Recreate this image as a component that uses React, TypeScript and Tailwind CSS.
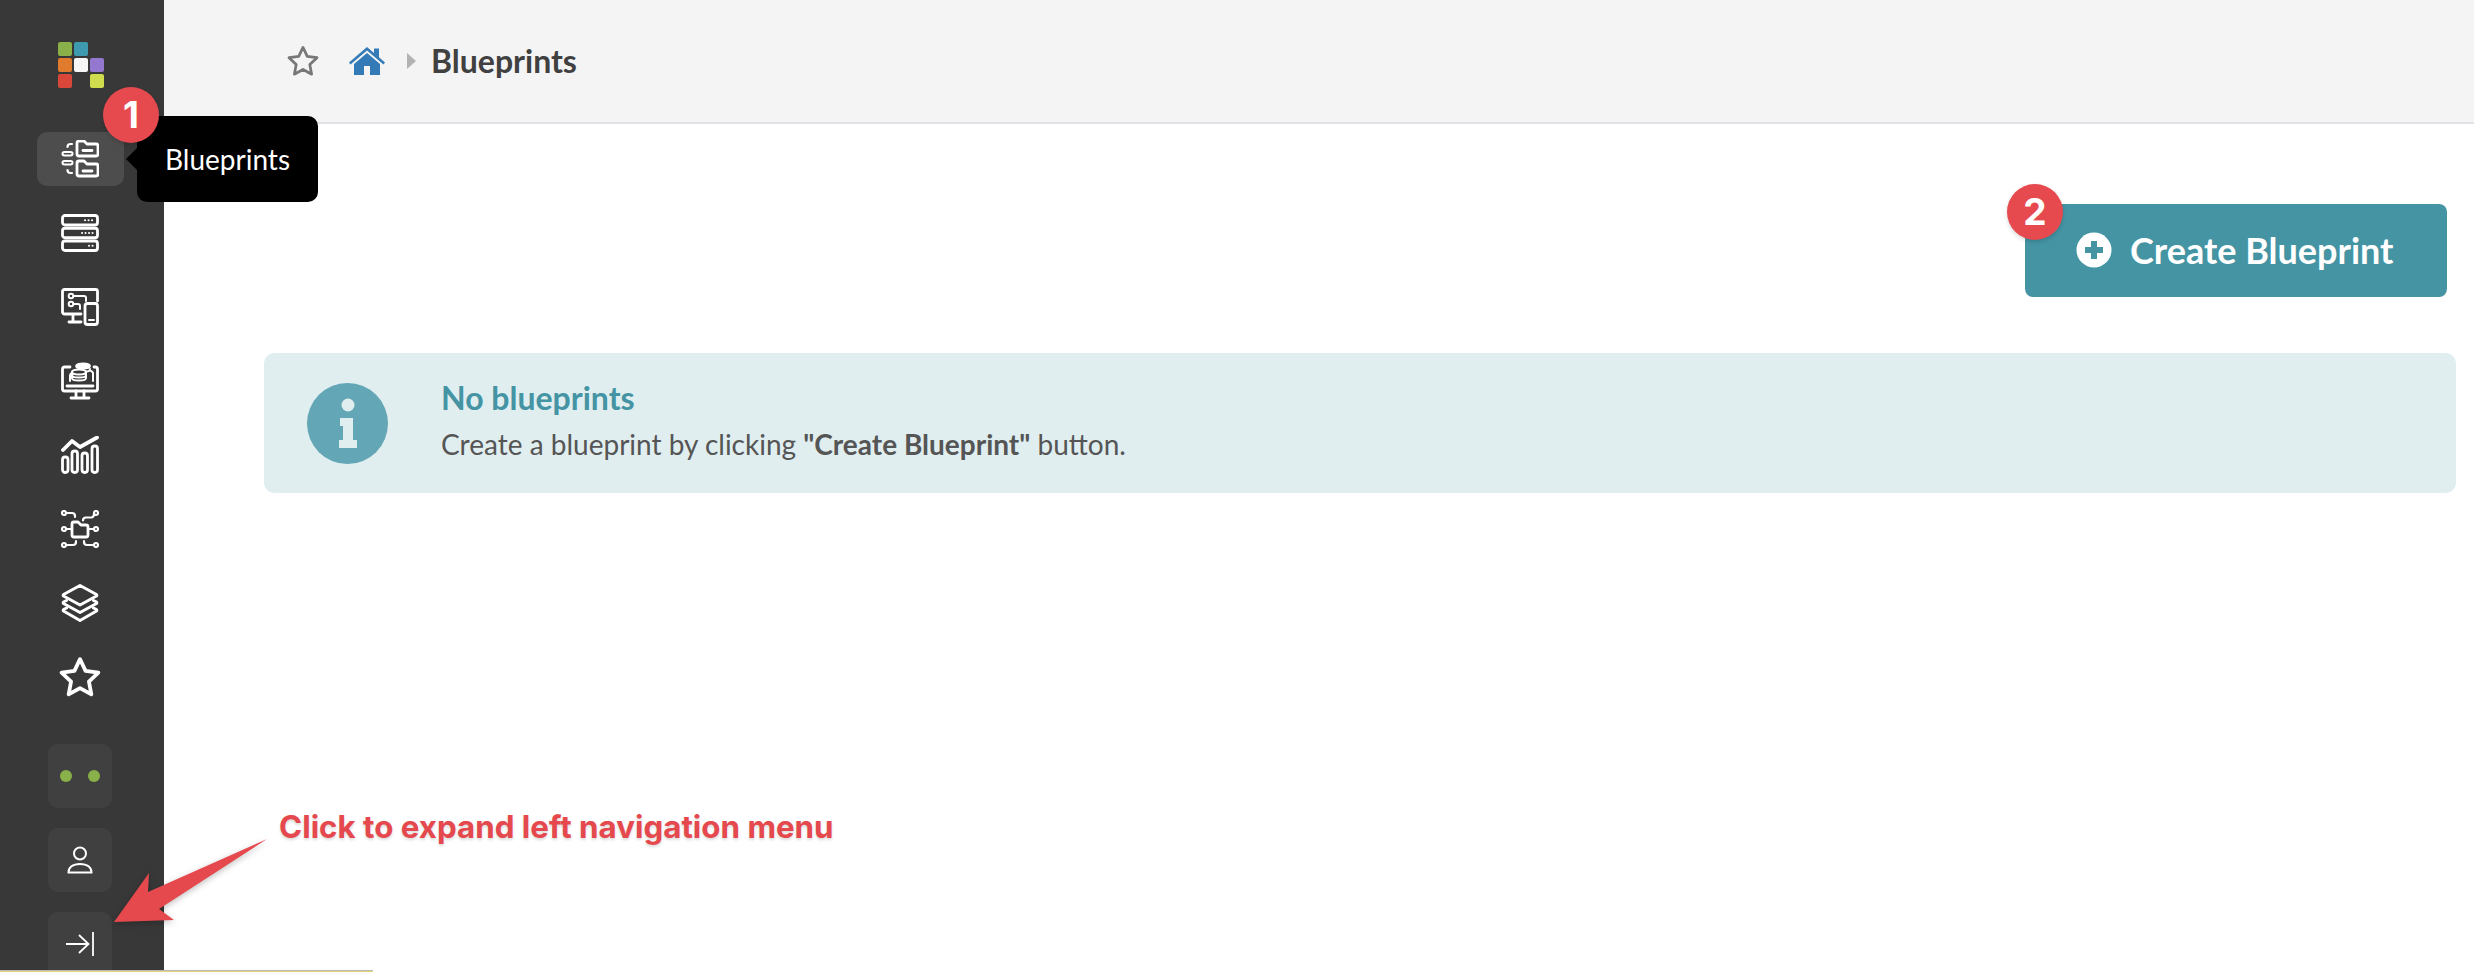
import type { ReactNode } from "react";

const lato = "font-['Lato',sans-serif]";

function Glyph({ children }: { children: ReactNode }) {
  return (
    <svg
      viewBox="0 0 38 38"
      className="h-[38px] w-[38px]"
      fill="none"
      stroke="#fff"
      strokeWidth="2.800"
      strokeLinecap="round"
      strokeLinejoin="round"
    >
      {children}
    </svg>
  );
}

const BlueprintsIcon = () => (
  <Glyph>
    <path d="M16 3a2 2 0 0 1 2-2h5l3 3h9a2 2 0 0 1 2 2v8a2 2 0 0 1-2 2H18a2 2 0 0 1-2-2z" />
    <path d="M22 10.500h9" />
    <path d="M16 23a2 2 0 0 1 2-2h5l3 3h9a2 2 0 0 1 2 2v8a2 2 0 0 1-2 2H18a2 2 0 0 1-2-2z" />
    <path d="M22 31h9" />
    <rect x="1.500" y="12" width="10" height="3.500" rx="1.750" strokeWidth="2" />
    <rect x="1.500" y="21" width="10" height="3.500" rx="1.750" strokeWidth="2" />
    <path d="M11 4H9.500a3 3 0 0 0-3 3M11 33H9.500a3 3 0 0 1-3-3" strokeWidth="2.200" />
  </Glyph>
);

const ServerIcon = () => (
  <Glyph>
    <rect x="1.500" y="1.500" width="35" height="9.500" rx="2.500" />
    <rect x="1.500" y="14.250" width="35" height="9.500" rx="2.500" />
    <rect x="1.500" y="27" width="35" height="9.500" rx="2.500" />
    <path d="M24 6.250h.1M27.500 6.250h.1M31 6.250h.1M21 19h.1M24.500 19h.1M28 19h.1M31.500 19h.1M28 31.750h.1M31.500 31.750h.1" strokeWidth="2" />
  </Glyph>
);

const DevicesIcon = () => (
  <Glyph>
    <path d="M20 26H3.500a2 2 0 0 1-2-2V3.500a2 2 0 0 1 2-2h31a2 2 0 0 1 2 2V13" />
    <path d="M12 27v6M8 34h12" />
    <circle cx="10" cy="8" r="2.300" strokeWidth="2" />
    <circle cx="10" cy="16" r="2.300" strokeWidth="2" />
    <path d="M12.500 8H23a2 2 0 0 1 2 2V13M12.500 16H17a2 2 0 0 1 2 2V21" strokeWidth="2" />
    <rect x="24" y="15.500" width="12.500" height="21" rx="2.500" fill="#383838" />
    <path d="M28 32h5" strokeWidth="2" />
  </Glyph>
);

const CostIcon = () => (
  <Glyph>
    <path d="M9 5H3.500a2 2 0 0 0-2 2v20a2 2 0 0 0 2 2h31a2 2 0 0 0 2-2V7a2 2 0 0 0-2-2H33" />
    <path d="M6 24h26M15 29v6M23 29v6M10 36h18" />
    <path d="M9 19v-5a3 3 0 0 1 3-3M32 19v-8a3 3 0 0 0-2-2" strokeWidth="2" />
    <ellipse cx="22" cy="4" rx="7" ry="2.600" fill="#fff" strokeWidth="1.800" />
    <ellipse cx="18" cy="10" rx="7" ry="2.600" fill="#383838" strokeWidth="2" />
    <path d="M11 10v6c0 1.500 3 2.600 7 2.600s7-1.100 7-2.600v-6M11 13c0 1.500 3 2.600 7 2.600s7-1.100 7-2.600M25 9.500c3 0 4-1 4-2.500" strokeWidth="2" />
  </Glyph>
);

const ChartIcon = () => (
  <Glyph>
    <path d="M2 14 11 5l8 6L36 1.500" strokeWidth="3.800" />
    <rect x="1.500" y="21" width="5.500" height="15.500" rx="2.700" />
    <rect x="11" y="15" width="5.500" height="21.500" rx="2.700" />
    <rect x="21" y="17" width="5.500" height="19.500" rx="2.700" />
    <rect x="31" y="10" width="5.500" height="26.500" rx="2.700" />
  </Glyph>
);

const CircuitIcon = () => (
  <Glyph>
    <path d="M11 14a2 2 0 0 1 2-2h4l3 3h5a2 2 0 0 1 2 2v8a2 2 0 0 1-2 2H13a2 2 0 0 1-2-2z" />
    <g strokeWidth="2.200">
      <circle cx="3" cy="3" r="2" />
      <circle cx="35" cy="3" r="2" />
      <circle cx="3" cy="19" r="2" />
      <circle cx="35" cy="19" r="2" />
      <circle cx="3" cy="35" r="2" />
      <circle cx="35" cy="35" r="2" />
      <path d="M5 3h6a3 3 0 0 1 3 3v1M33 3.500c0 3-1 4-3 4h-5a3 3 0 0 0-3 3M5 19h6M27 19h6M5 35h7a3 3 0 0 0 3-3v-1M33 35h-7a3 3 0 0 1-3-3v-1" />
    </g>
  </Glyph>
);

const LayersIcon = () => (
  <Glyph>
    <path d="M19 1.500 35.500 10.500a1 1 0 0 1 0 1.500L19 21 2.500 12a1 1 0 0 1 0-1.500z" strokeWidth="3" />
    <path d="M5.500 16.500 2.500 18a1 1 0 0 0 0 1.500L19 28.500l16.500-9a1 1 0 0 0 0-1.500l-3-1.500" strokeWidth="3" />
    <path d="M5.500 24 2.500 25.500a1 1 0 0 0 0 1.500L19 36.500l16.500-9.500a1 1 0 0 0 0-1.500L32.500 24" strokeWidth="3" />
  </Glyph>
);

const StarIcon = ({ size, color, width }: { size: number; color: string; width: number }) => (
  <svg viewBox="0 0 40 40" width={size} height={size} fill="none" stroke={color} strokeWidth={width} strokeLinejoin="round">
    <path d="M20 3l5.300 11.200 12.200 1.600-9 8.500 2.300 12.200L20 30.600 9.200 36.500l2.300-12.200-9-8.500 12.200-1.600z" />
  </svg>
);

const navIcons = [
  <BlueprintsIcon />,
  <ServerIcon />,
  <DevicesIcon />,
  <CostIcon />,
  <ChartIcon />,
  <CircuitIcon />,
  <LayersIcon />,
  <StarIcon size={42} color="#fff" width={3.6} />,
];

function Logo() {
  return (
    <div className="grid w-[46px] grid-cols-[14px_14px_14px] gap-[2px]">
      <span className="h-[14px] rounded-[2px] bg-[#8ab04a]" />
      <span className="h-[14px] rounded-[2px] bg-[#3e9aae]" />
      <span />
      <span className="h-[14px] rounded-[2px] bg-[#e07a2c]" />
      <span className="h-[14px] rounded-[2px] bg-[#f6f6f6]" />
      <span className="h-[14px] rounded-[2px] bg-[#9478cf]" />
      <span className="h-[14px] rounded-[2px] bg-[#d9473a]" />
      <span />
      <span className="h-[14px] rounded-[2px] bg-[#cfdc4d]" />
    </div>
  );
}

function Sidebar() {
  return (
    <aside className="flex h-full w-[164px] shrink-0 flex-col items-center bg-[#383838] pr-[4px] pt-[42px]">
      <div className="mb-[34px] pl-[2px]">
        <Logo />
      </div>
      <nav className="flex flex-col items-center">
        {navIcons.map((icon, i) => (
          <div key={i} className="flex h-[74px] w-[87px] items-center justify-center">
            {i === 0 ? (
              <div className="flex h-[54px] w-[87px] items-center justify-center rounded-[10px] bg-[#4d4d4d]">{icon}</div>
            ) : (
              icon
            )}
          </div>
        ))}
      </nav>
      <div className="mt-[30px] flex flex-col gap-[20px]">
        <div className="flex h-[64px] w-[64px] items-center justify-center gap-[16px] rounded-[10px] bg-[#404040]">
          <span className="h-[12px] w-[12px] rounded-full bg-[#8ab04a]" />
          <span className="h-[12px] w-[12px] rounded-full bg-[#8ab04a]" />
        </div>
        <div className="flex h-[64px] w-[64px] items-center justify-center rounded-[10px] bg-[#404040]">
          <svg viewBox="0 0 26 28" className="h-[28px] w-[26px]" fill="none" stroke="#fff" strokeWidth="2">
            <circle cx="13" cy="7.500" r="6" />
            <path d="M1.500 26.500c0-5 4-8.500 11.500-8.500s11.500 3.500 11.500 8.500z" />
          </svg>
        </div>
        <div className="flex h-[64px] w-[64px] items-center justify-center rounded-[10px] bg-[#404040]">
          <svg viewBox="0 0 30 26" className="h-[26px] w-[30px]" fill="none" stroke="#fff" strokeWidth="1.800">
            <path d="M1 13h22M14 4l9.500 9-9.500 9M28 1v24" />
          </svg>
        </div>
      </div>
    </aside>
  );
}

function Header() {
  return (
    <header className={`flex h-[124px] items-center border-b-2 border-[#e0e2e6] bg-[#f4f4f4] pl-[123px] ${lato}`}>
      <StarIcon size={32} color="#777" width={3.4} />
      <svg viewBox="0 0 36 28" className="ml-[30px] h-[28px] w-[36px]" fill="#337ab7">
        <path d="M18 0 0 15.500l1.500 2L18 3.500l16.500 14 1.500-2-6-5.200V1.500h-5v4.500z" />
        <path d="M18 6 5 17v11h10v-9h6v9h10V17z" />
      </svg>
      <span className="ml-[22px] h-0 w-0 border-y-[8px] border-l-[9px] border-y-transparent border-l-[#b3b3b3]" />
      <h1 className="ml-[15px] text-[32px] font-bold text-[#404040]">Blueprints</h1>
    </header>
  );
}

function Content() {
  return (
    <main className={`flex flex-col pl-[100px] pr-[18px] ${lato}`}>
      <div className="flex justify-end pr-[9px] pt-[80px]">
        <button className="flex h-[93px] w-[422px] items-center rounded-[8px] bg-[#4494a4] pb-[2px] pl-[51px] text-[36px] font-bold text-white">
          <svg viewBox="0 0 36 36" className="mr-[18px] h-[36px] w-[36px]">
            <circle cx="18" cy="18" r="17.500" fill="#fff" />
            <path d="M18 9v18M9 18h18" stroke="#4494a4" strokeWidth="6" />
          </svg>
          Create Blueprint
        </button>
      </div>
      <section className="mt-[56px] flex h-[140px] items-center rounded-[10px] bg-[#e0eef0] pl-[43px]">
        <div className="flex h-[81px] w-[81px] items-center justify-center rounded-full bg-[#63a6b5]">
          <svg viewBox="0 0 20 50" className="h-[50px] w-[20px]" fill="#e0eef0">
            <circle cx="10" cy="7" r="6.500" />
            <path d="M2 20h13v22h4v8H1v-8h4V28H2z" />
          </svg>
        </div>
        <div className="ml-[53px] pb-[6px]">
          <h2 className="text-[32px] font-bold leading-[38px] text-[#4494a4]">No blueprints</h2>
          <p className="mt-[9px] text-[28px] leading-[36px] text-[#555]">
            Create a blueprint by clicking <strong className="font-bold">"Create Blueprint"</strong> button.
          </p>
        </div>
      </section>
    </main>
  );
}

function Badge({ label, className }: { label: string; className: string }) {
  return (
    <div
      className={`absolute flex h-[56px] w-[56px] items-center justify-center rounded-full bg-[#e64a4f] font-['Inter',sans-serif] text-[37px] font-bold text-white shadow-[0_2px_4px_rgba(0,0,0,0.15)] ${className}`}
    >
      {label}
    </div>
  );
}

export default function App() {
  return (
    <div className="relative flex h-[972px] w-[2474px] overflow-hidden bg-white">
      <Sidebar />
      <div className="min-w-0 flex-1">
        <Header />
        <Content />
      </div>

      {/* tooltip */}
      <div className={`absolute left-[137px] top-[116px] flex h-[86px] w-[181px] items-center justify-center rounded-[10px] bg-black text-[28px] text-white ${lato}`}>
        <span className="absolute left-[-11px] top-[32px] h-0 w-0 border-y-[11px] border-r-[11px] border-y-transparent border-r-black" />
        Blueprints
      </div>

      {/* annotations */}
      <Badge label="1" className="left-[103px] top-[87px]" />
      <Badge label="2" className="left-[2007px] top-[184px]" />
      <svg viewBox="0 0 180 100" className="absolute left-[104px] top-[830px] h-[100px] w-[180px] drop-shadow-[0_2px_3px_rgba(0,0,0,0.25)]">
        <path d="M10 92 45 43 44 62 163 9 55 79 70 90z" fill="#e5484d" />
      </svg>
      <div className="absolute left-[279px] top-[804px] font-['Inter',sans-serif] text-[31.300px] font-bold text-[#e5484d] [text-shadow:0_2px_3px_rgba(0,0,0,0.15)]">
        Click to expand left navigation menu
      </div>
      <div className="absolute bottom-0 left-0 h-[2px] w-[373px] border-t border-[#b9b9b9] bg-[#e8d27a]" />
    </div>
  );
}
